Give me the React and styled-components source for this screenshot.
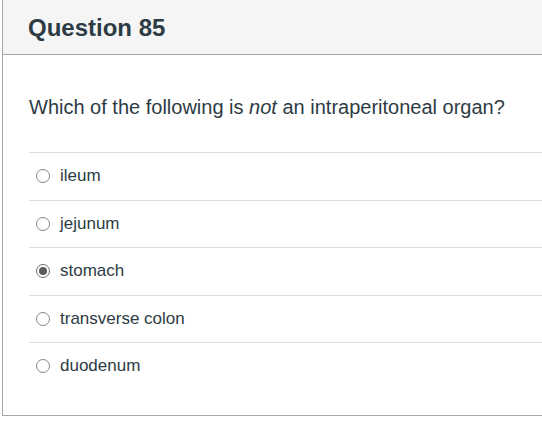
import React from 'react';
import styled, { createGlobalStyle } from 'styled-components';

const GlobalStyle = createGlobalStyle`
  html, body {
    margin: 0;
    padding: 0;
    background: #ffffff;
    overflow: hidden;
  }
`;

const Card = styled.div`
  margin-left: 2px;
  width: 540px;
  height: 415px;
  border-left: 1px solid #a6a6a6;
  border-bottom: 1px solid #a6a6a6;
  font-family: 'Liberation Sans', Arial, sans-serif;
  color: #2d3b45;
  background: #ffffff;
`;

const Header = styled.div`
  height: 55px;
  background: #f5f5f5;
  border-bottom: 1px solid #a6a6a6;
  display: flex;
  align-items: center;
  padding-left: 25px;
  box-sizing: border-box;
`;

const Title = styled.h2`
  margin: 0;
  padding-top: 1px;
  font-size: 24px;
  font-weight: bold;
  color: #2d3b45;
`;

const Body = styled.div`
  padding: 0 0 0 26px;
`;

const Prompt = styled.p`
  margin: 0;
  padding: 39px 0 32px 0;
  font-size: 20px;
  line-height: 26px;
  color: #2d3b45;
`;

const Options = styled.div`
  display: flex;
  flex-direction: column;
`;

const Option = styled.label`
  display: flex;
  align-items: center;
  height: 46.5px;
  border-top: 1px solid #dcdcdc;
  padding-left: 7px;
  font-size: 17px;
  color: #2d3b45;
  cursor: pointer;
`;

const Radio = styled.span`
  width: 14px;
  height: 14px;
  box-sizing: border-box;
  border-radius: 50%;
  border: 1px solid ${(props) => (props.checked ? '#6e6e6e' : '#858585')};
  display: flex;
  align-items: center;
  justify-content: center;
  margin-right: 10px;
  background: #ffffff;

  &::after {
    content: '';
    display: ${(props) => (props.checked ? 'block' : 'none')};
    width: 8px;
    height: 8px;
    border-radius: 50%;
    background: #5c5c5c;
  }
`;

const answers = ['ileum', 'jejunum', 'stomach', 'transverse colon', 'duodenum'];

const App = () => {
  const selected = 'stomach';
  return (
    <>
      <GlobalStyle />
      <Card>
        <Header>
          <Title>Question 85</Title>
        </Header>
        <Body>
          <Prompt>
            Which of the following is <em>not</em> an intraperitoneal organ?
          </Prompt>
          <Options>
            {answers.map((answer) => (
              <Option key={answer}>
                <Radio checked={answer === selected} />
                {answer}
              </Option>
            ))}
          </Options>
        </Body>
      </Card>
    </>
  );
};

export default App;
